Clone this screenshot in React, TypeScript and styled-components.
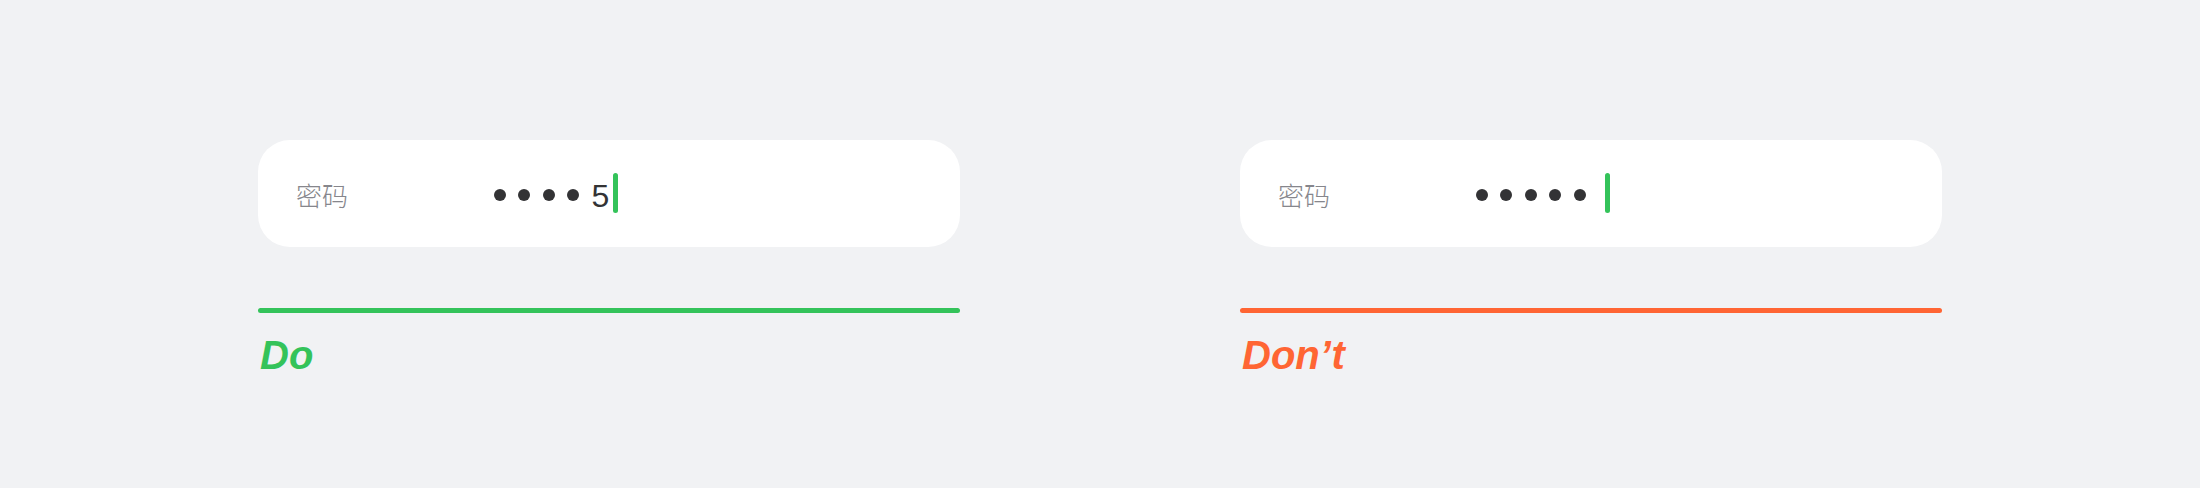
import React from "react";
import styled, { createGlobalStyle } from "styled-components";

const GlobalStyle = createGlobalStyle`
  html, body {
    margin: 0;
    padding: 0;
    background: #f1f2f4;
  }
  body {
    font-family: "Liberation Sans", "Noto Sans CJK SC", sans-serif;
  }
`;

interface example {
  dots: number;
  typed?: string;
  good: boolean;
}

const examples: example[] = [
  { dots: 4, typed: "5", good: true },
  { dots: 5, good: false },
];

function PasswordExample({ dots, typed, good }: example) {
  return (
    <Column>
      <Card>
        <Label>密码</Label>
        <Value>
          {Array.from({ length: dots }).map((_, i) => (
            <Dot key={i} />
          ))}
          {typed && <Typed>{typed}</Typed>}
          <Cursor $afterText={!!typed} />
        </Value>
      </Card>
      <Rule $good={good} />
      <Verdict $good={good}>{good ? "Do" : "Don’t"}</Verdict>
    </Column>
  );
}

function App() {
  return (
    <>
      <GlobalStyle />
      <Page>
        {examples.map((ex, index) => (
          <PasswordExample key={index} {...ex} />
        ))}
      </Page>
    </>
  );
}

export default App;

const green = "#34c35a";
const orange = "#ff6533";

const Page = styled.div`
  display: flex;
  justify-content: center;
  gap: 280px;
  padding-top: 140px;
  width: 2200px;
  height: 488px;
  box-sizing: border-box;
`;

const Column = styled.div`
  display: flex;
  flex-direction: column;
  width: 702px;
`;

const Card = styled.div`
  display: flex;
  align-items: center;
  height: 107px;
  padding: 3px 0 0 38px;
  box-sizing: border-box;
  background: #ffffff;
  border-radius: 32px;
`;

const Label = styled.div`
  width: 198px;
  font-size: 26px;
  color: #86868c;
  font-family: "Noto Sans CJK SC", sans-serif;
  font-weight: 300;
  line-height: 1;
`;

const Value = styled.div`
  display: flex;
  align-items: center;
`;

const Dot = styled.span`
  width: 12px;
  height: 12px;
  border-radius: 50%;
  background: #333335;
  margin-right: 12.4px;
`;

const Typed = styled.span`
  font-size: 32px;
  line-height: 1;
  color: #333335;
  margin-left: 0;
  margin-top: 1px;
`;

const Cursor = styled.span<{ $afterText: boolean }>`
  width: 5px;
  height: 40px;
  border-radius: 3px;
  background: ${green};
  margin-left: ${(props) => (props.$afterText ? "4px" : "7px")};
  margin-top: -5px;
`;

const Rule = styled.div<{ $good: boolean }>`
  height: 5px;
  margin-top: 61px;
  border-radius: 3px;
  background: ${(props) => (props.$good ? green : orange)};
`;

const Verdict = styled.div<{ $good: boolean }>`
  margin-top: 22px;
  margin-left: 2px;
  font-family: "Liberation Sans", sans-serif;
  font-size: 40px;
  font-weight: 700;
  font-style: italic;
  line-height: 1;
  color: ${(props) => (props.$good ? green : orange)};
`;
